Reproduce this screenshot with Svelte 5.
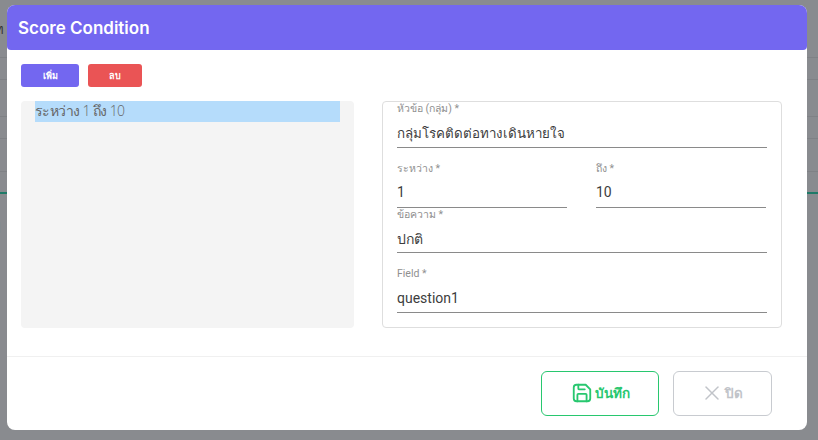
<script>
	const fields = [
		{ label: 'หัวข้อ (กลุ่ม) *', value: 'กลุ่มโรคติดต่อทางเดินหายใจ' }
	];
	const backLines = [57, 79, 116, 138, 171];
</script>

<div class="page">
	<div class="behind">
		<span class="peek-char">ท</span>
		{#each backLines as y}
			<div class="line" style="top: {y}px"></div>
		{/each}
		<div class="line teal"></div>
		<span class="peek-bold">1</span>
	</div>

	<div class="modal" role="dialog" aria-modal="true">
		<header class="modal-head">
			<h2>Score Condition</h2>
		</header>

		<div class="modal-body">
			<div class="toolbar">
				<button type="button" class="btn-sm add">เพิ่ม</button>
				<button type="button" class="btn-sm del">ลบ</button>
			</div>
			<div class="columns">
				<div class="list">
					<div class="list-item">ระหว่าง 1 ถึง 10</div>
				</div>
				<div class="form">
					<div class="field first">
						<span class="label">{fields[0].label}</span>
						<span class="value thai">{fields[0].value}</span>
					</div>
					<div class="row">
						<div class="field">
							<span class="label">ระหว่าง *</span>
							<span class="value">1</span>
						</div>
						<div class="field">
							<span class="label">ถึง *</span>
							<span class="value">10</span>
						</div>
					</div>
					<div class="field msg">
						<span class="label">ข้อความ *</span>
						<span class="value">ปกติ</span>
					</div>
					<div class="field last">
						<span class="label">Field *</span>
						<span class="value">question1</span>
					</div>
				</div>
			</div>
		</div>

		<footer class="modal-foot">
			<button type="button" class="btn save">
				<svg width="22" height="22" viewBox="0 0 24 24" fill="none" stroke="currentColor" stroke-width="2" stroke-linecap="round" stroke-linejoin="round">
					<path d="M6 3h10l5 5v10a3 3 0 0 1-3 3H6a3 3 0 0 1-3-3V6a3 3 0 0 1 3-3z" />
					<path d="M7 21v-7a1 1 0 0 1 1-1h8a1 1 0 0 1 1 1v7" />
					<path d="M8 3v4a1 1 0 0 0 1 1h6" />
				</svg>
				บันทึก
			</button>
			<button type="button" class="btn close">
				<svg width="24" height="24" viewBox="0 0 24 24" fill="none" stroke="currentColor" stroke-width="1.5" stroke-linecap="round" stroke-linejoin="round">
					<path d="M18 6L6 18" />
					<path d="M6 6l12 12" />
				</svg>
				ปิด
			</button>
		</footer>
	</div>
</div>

<style>
	:global(body) {
		margin: 0;
		font-family: Roboto, "Noto Sans", sans-serif;
	}
	.page {
		position: relative;
		width: 818px;
		height: 440px;
		background: #898b8f;
		overflow: hidden;
		padding: 5px 11px 10px 7px;
		box-sizing: border-box;
	}
	.behind span,
	.behind div {
		position: absolute;
	}
	.peek-char {
		left: -5px;
		top: 19px;
		font-size: 13px;
		color: #333;
	}
	.peek-bold {
		left: -6px;
		top: 220px;
		font-size: 14px;
		font-weight: 700;
		color: #222;
	}
	.line {
		left: 0;
		right: 0;
		height: 1px;
		background: #7f8185;
	}
	.teal {
		top: 192px;
		height: 2px;
		background: #1f7a68;
	}
	.modal {
		position: relative;
		height: 425px;
		background: #fff;
		border-radius: 8px;
		display: flex;
		flex-direction: column;
	}
	.modal-head {
		height: 45px;
		background: #7367f0;
		border-radius: 8px 8px 4px 4px;
		display: flex;
		align-items: center;
		padding: 0 11px;
		box-sizing: border-box;
	}
	.modal-head h2 {
		margin: 0;
		color: #fff;
		font-family: Inter, "Open Sans", sans-serif;
		font-size: 17px;
		font-weight: 600;
	}
	.modal-body {
		flex: 1;
		padding: 14px 25px 0 14px;
	}
	.toolbar {
		display: flex;
		gap: 9px;
		margin-bottom: 14px;
	}
	.btn-sm {
		height: 23px;
		border: none;
		border-radius: 3px;
		color: #fff;
		font-size: 9px;
		font-weight: 700;
		padding: 0;
		font-family: inherit;
	}
	.add { width: 58px; background: #7367f0; }
	.del { width: 54px; background: #ea5455; }
	.columns {
		display: flex;
		gap: 28px;
		height: 227px;
	}
	.list {
		width: 333px;
		background: #f4f4f4;
		border-radius: 4px;
		padding: 0 14px;
		box-sizing: border-box;
	}
	.list-item {
		height: 21px;
		line-height: 20px;
		background: #b5dcfb;
		color: #666;
		font-size: 14px;
		letter-spacing: -0.6px;
		font-family: "Open Sans", sans-serif;
		font-weight: 300;
	}
	.form {
		flex: 1;
		border: 1px solid #dedede;
		border-radius: 4px;
		padding: 0 14px;
		box-sizing: border-box;
		display: flex;
		flex-direction: column;
	}
	.field {
		display: flex;
		flex-direction: column;
		border-bottom: 1px solid #8a8a8a;
		box-sizing: border-box;
		flex: none;
	}
	.label {
		font-size: 10.5px;
		color: #8f8f8f;
		line-height: 14px;
		white-space: nowrap;
	}
	.value {
		font-size: 14px;
		color: #3d3d3d;
		line-height: 20px;
		margin-top: 7px;
	}
	.thai { font-size: 13.35px; }
	.first { height: 46px; }
	.first .value { margin-top: 8px; }
	.row {
		display: flex;
		gap: 29px;
		margin-top: 14px;
		padding-right: 1px;
	}
	.row .field { height: 46px; flex: 1; }
	.row .value { margin-top: 6px; }
	.msg { height: 45px; }
	.last { height: 46px; margin-top: 14px; }
	.modal-foot {
		height: 74px;
		border-top: 1px solid #f0f0f0;
		display: flex;
		justify-content: flex-end;
		align-items: flex-start;
		gap: 14px;
		padding: 14px 35px 0 0;
		box-sizing: border-box;
	}
	.btn {
		height: 45px;
		background: #fff;
		border-radius: 6px;
		display: inline-flex;
		align-items: center;
		justify-content: center;
		gap: 2px;
		font-size: 13.5px;
		font-weight: 700;
		font-family: inherit;
		padding: 0 0 2px;
	}
	.save {
		width: 118px;
		border: 1px solid #28c76f;
		color: #28c76f;
	}
	.close {
		width: 99px;
		border: 1px solid #c8cbd0;
		color: #c1c4c9;
		gap: 1px;
		padding-right: 3px;
	}
</style>
